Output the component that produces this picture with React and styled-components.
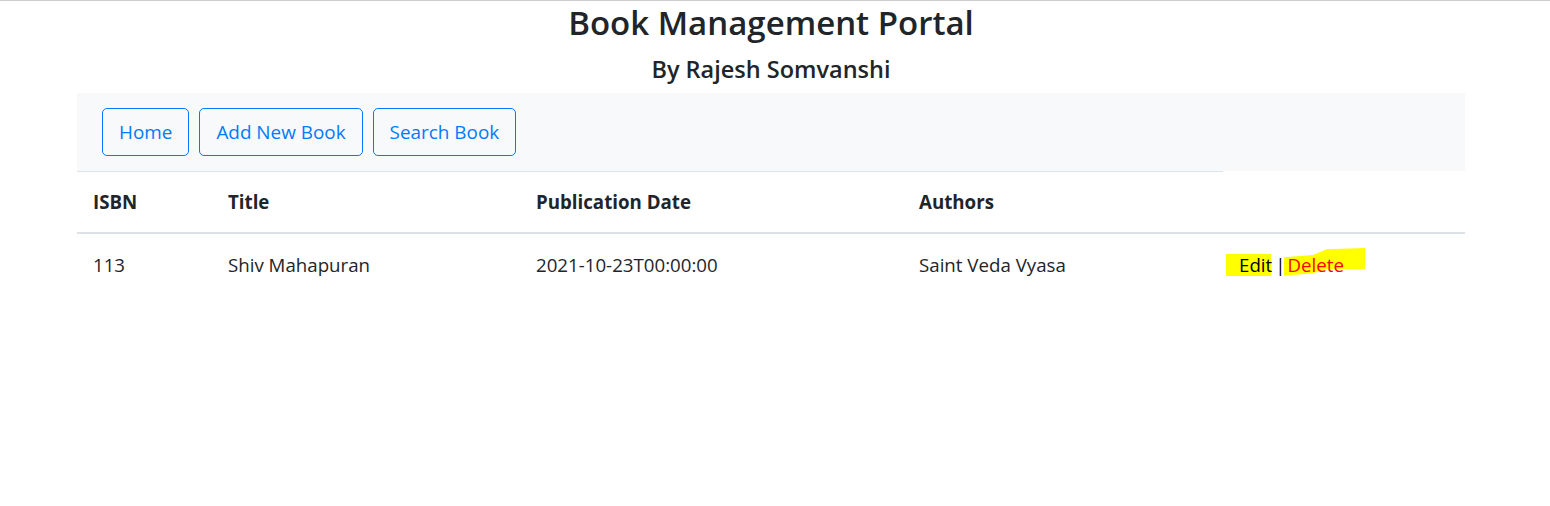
import React from "react";
import styled, { createGlobalStyle } from "styled-components";

const GlobalStyle = createGlobalStyle`
  html, body {
    margin: 0;
    padding: 0;
    background: #fff;
  }
  body {
    font-family: "Open Sans", "Noto Sans", sans-serif;
    font-size: 18.7px;
    line-height: 30px;
    color: #212529;
    border-top: 1px solid #cccccc;
  }
`;

const Page = styled.div`
  width: 1388px;
  margin: 0 85px 0 77px;
`;

const Title = styled.h3`
  margin: 2px 0 0;
  font-size: 33px;
  font-weight: 600;
  line-height: 40px;
  text-align: center;
`;

const Subtitle = styled.h5`
  margin: 12px 0 10px;
  font-size: 23.5px;
  font-weight: 600;
  line-height: 28px;
  text-align: center;
`;

const Nav = styled.nav`
  display: flex;
  gap: 10px;
  padding: 15px 25px;
  background: #f8f9fa;
`;

const NavButton = styled.button`
  height: 48px;
  padding: 0 16px;
  font-family: inherit;
  font-size: 18.9px;
  color: #007bff;
  background: transparent;
  border: 1px solid #007bff;
  border-radius: 5px;
  cursor: pointer;
`;

const Table = styled.table`
  width: 100%;
  border-collapse: collapse;
  table-layout: fixed;
`;

const Th = styled.th`
  box-sizing: border-box;
  width: ${p => p.$w}px;
  padding: 15px 16px;
  text-align: left;
  font-weight: 700;
  border-top: 1px solid #dee2e6;
  border-bottom: 2px solid #dee2e6;
`;

const BlankTh = styled.th`
  border-bottom: 2px solid #dee2e6;
`;

const Td = styled.td`
  padding: 16px 16px;
  vertical-align: top;
`;

const Actions = styled.span`
  position: relative;
  display: inline-flex;
  align-items: baseline;
`;

const Mark = styled.span`
  position: relative;
  color: ${p => p.$color};
  z-index: 1;
`;

// marker strokes drawn over the screenshot
const Highlight = styled.span`
  position: absolute;
  background: #ffff00;
  z-index: 0;
  ${p => p.$shape}
`;

const Sep = styled.span`
  margin: 0 2px 0 3px;
  color: #000;
`;

export default function App() {
  return (
    <>
      <GlobalStyle />
      <Page>
        <Title>Book Management Portal</Title>
        <Subtitle>By Rajesh Somvanshi</Subtitle>
        <Nav>
          <NavButton>Home</NavButton>
          <NavButton>Add New Book</NavButton>
          <NavButton>Search Book</NavButton>
        </Nav>
        <Table>
          <thead>
            <tr>
              <Th $w={135}>ISBN</Th>
              <Th $w={308}>Title</Th>
              <Th $w={383}>Publication Date</Th>
              <Th $w={320}>Authors</Th>
              <BlankTh />
            </tr>
          </thead>
          <tbody>
            <tr>
              <Td>113</Td>
              <Td>Shiv Mahapuran</Td>
              <Td>2021-10-23T00:00:00</Td>
              <Td>Saint Veda Vyasa</Td>
              <Td>
                <Actions>
                  <Highlight $shape="left: -13px; width: 45px; top: 4px; height: 22px;" />
                  <Mark $color="#000">Edit</Mark>
                  <Sep>|</Sep>
                  <Highlight
                    $shape="left: 45px; width: 81px; top: -2px; height: 28px; clip-path: polygon(0 9.3px, 29px 7px, 42.7px 1.3px, 81px 0, 81px 21px, 42.7px 21.3px, 29px 25.3px, 0 27.7px);"
                  />
                  <Mark $color="#ff0000">Delete</Mark>
                </Actions>
              </Td>
            </tr>
          </tbody>
        </Table>
      </Page>
    </>
  );
}
